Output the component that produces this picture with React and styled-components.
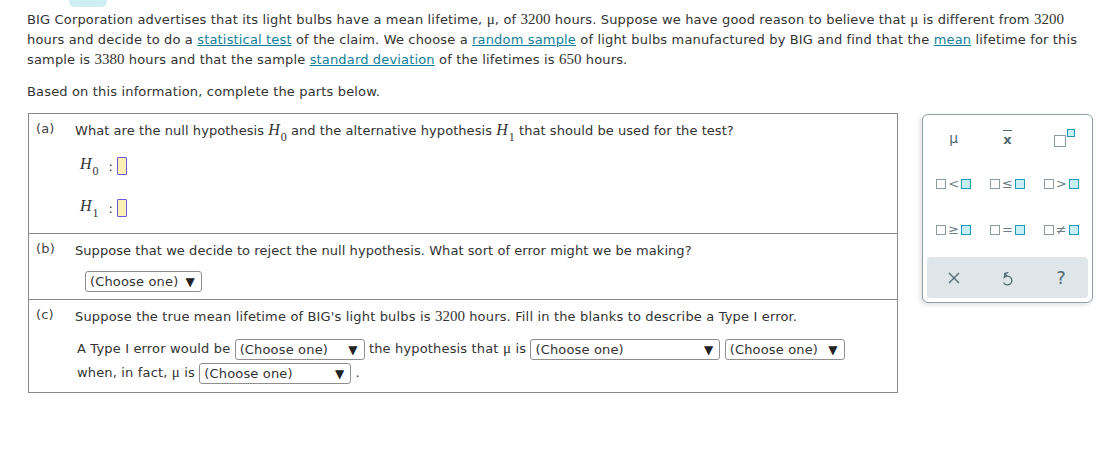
import React from 'react'
import styled, { createGlobalStyle } from 'styled-components'

const Global = createGlobalStyle`
  html, body { margin: 0; padding: 0; background: #fff; }
  body {
    font-family: "DejaVu Sans", Verdana, sans-serif;
    font-size: 13px;
    letter-spacing: 0.16px;
    color: #333;
  }
`

function Choose({ width }) {
    return (
        <Select $w={width}>
            <span>(Choose one)</span>
            <Arrow>▼</Arrow>
        </Select>
    )
}

function Hyp({ sub }) {
    return (
        <HVar>
            H<Sub>{sub}</Sub>
        </HVar>
    )
}

function Slot({ filled }) {
    return <Sq $filled={filled} />
}

function App() {
    return (
        <Page>
            <Global />
            <Badge />
            <Intro>
                <Row>
                    BIG Corporation advertises that its light bulbs have a mean lifetime, <Mu>μ</Mu>, of <Num>3200</Num> hours. Suppose we have good reason to believe that <Mu>μ</Mu> is different from <Num>3200</Num>
                </Row>
                <Row>
                    hours and decide to do a <Link>statistical test</Link> of the claim. We choose a <Link>random sample</Link> of light bulbs manufactured by BIG and find that the <Link>mean</Link> lifetime for this
                </Row>
                <Row>
                    sample is <Num>3380</Num> hours and that the sample <Link>standard deviation</Link> of the lifetimes is <Num>650</Num> hours.
                </Row>
            </Intro>
            <Lead>Based on this information, complete the parts below.</Lead>

            <Work>
                <Table>
                    <Part $h={120}>
                        <Label>(a)</Label>
                        <Body>
                            <Question $tight>
                                What are the null hypothesis <Hyp sub="0" /> and the alternative hypothesis <Hyp sub="1" /> that should be used for the test?
                            </Question>
                            <HypRow $top={12}>
                                <Hyp sub="0" /><Colon>:</Colon><Input />
                            </HypRow>
                            <HypRow $top={20}>
                                <Hyp sub="1" /><Colon>:</Colon><Input />
                            </HypRow>
                        </Body>
                    </Part>
                    <Part $h={66}>
                        <Label>(b)</Label>
                        <Body>
                            <Question $tight>Suppose that we decide to reject the null hypothesis. What sort of error might we be making?</Question>
                            <Indent $top={9}>
                                <Choose width={117} />
                            </Indent>
                        </Body>
                    </Part>
                    <Part $h={92} $last>
                        <Label>(c)</Label>
                        <Body>
                            <Question>Suppose the true mean lifetime of BIG's light bulbs is <Num>3200</Num> hours. Fill in the blanks to describe a Type I error.</Question>
                            <Sentence>
                                <Line>
                                    A Type I error would be <Choose width={130} /> the hypothesis that <Mu>μ</Mu> is <Choose width={190} /> <Choose width={120} />
                                </Line>
                                <Line>
                                    when, in fact, <Mu>μ</Mu> is <Choose width={152} /> .
                                </Line>
                            </Sentence>
                        </Body>
                    </Part>
                </Table>

                <Pad>
                    <Keys>
                        <Key><MuKey>μ</MuKey></Key>
                        <Key><XBar>x</XBar></Key>
                        <Key>
                            <Power>
                                <BigSq />
                                <SmallSq />
                            </Power>
                        </Key>
                        <Key><Rel><Slot /><Op>&lt;</Op><Slot filled /></Rel></Key>
                        <Key><Rel><Slot /><Op>≤</Op><Slot filled /></Rel></Key>
                        <Key><Rel><Slot /><Op>&gt;</Op><Slot filled /></Rel></Key>
                        <Key><Rel><Slot /><Op>≥</Op><Slot filled /></Rel></Key>
                        <Key><Rel><Slot /><Op>=</Op><Slot filled /></Rel></Key>
                        <Key><Rel><Slot /><Op>≠</Op><Slot filled /></Rel></Key>
                    </Keys>
                    <Tools>
                        <svg width="14" height="14" viewBox="0 0 14 14">
                            <path d="M2 2 L12 12 M12 2 L2 12" stroke="#4f6a73" strokeWidth="1.4" fill="none" />
                        </svg>
                        <svg width="14" height="16" viewBox="0 0 14 16">
                            <path d="M5 3.4 L4.4 7.4 A4.4 4.4 0 1 1 3.8 13" stroke="#4f6a73" strokeWidth="1.3" fill="none" strokeLinecap="round" />
                            <path d="M8 2.6 L5 3.4 L6.6 5.8" stroke="#4f6a73" strokeWidth="1.3" fill="none" strokeLinecap="round" strokeLinejoin="round" />
                        </svg>
                        <QMark>?</QMark>
                    </Tools>
                </Pad>
            </Work>
        </Page>
    )
}

export default App

const Page = styled.div`
position: relative;
padding: 10px 0 0 27px;
width: 1091px;
box-sizing: border-box;
`

const Badge = styled.div`
position: absolute;
left: 69px;
top: -10px;
width: 38px;
height: 17px;
border-radius: 6px;
background: #cdeef3;
`

const Intro = styled.div`
line-height: 20px;
`

const Row = styled.div`
white-space: nowrap;
height: 20px;
`

const Num = styled.span`
font-family: "Liberation Serif", "Times New Roman", serif;
font-size: 15px;
line-height: 1;
letter-spacing: 0;
`

const Mu = styled.span`
font-family: "Liberation Serif", "Times New Roman", serif;
font-size: 15px;
line-height: 1;
`

const Link = styled.a`
color: #117e99;
text-decoration: underline;
cursor: pointer;
`

const Lead = styled.p`
margin: 12px 0 0;
line-height: 20px;
`

const Work = styled.div`
display: flex;
align-items: flex-start;
gap: 24px;
margin-top: 11px;
`

const Table = styled.div`
flex: none;
width: 868px;
border: 1px solid #8a8a8a;
margin-left: 1px;
`

const Part = styled.div`
display: flex;
height: ${p => p.$h}px;
box-sizing: border-box;
border-bottom: ${p => (p.$last ? 'none' : '1px solid #8a8a8a')};
padding: 6px 0 0 7px;
`

const Label = styled.div`
width: 39px;
flex: none;
color: #444;
line-height: 18px;
`

const Body = styled.div`
flex: 1;
`

const Question = styled.div`
line-height: 22px;
white-space: nowrap;
letter-spacing: ${p => (p.$tight ? '0.06px' : '0.16px')};
`

const HVar = styled.span`
font-family: "Liberation Serif", "Times New Roman", serif;
font-style: italic;
font-size: 16px;
line-height: 1;
letter-spacing: 0;
`

const Sub = styled.sub`
font-style: normal;
font-size: 12px;
vertical-align: -6px;
margin-left: 1px;
line-height: 1;
`

const HypRow = styled.div`
display: flex;
align-items: center;
margin: ${p => p.$top}px 0 0 5px;
height: 22px;
`

const Colon = styled.span`
margin: 0 4px 0 10px;
`

const Input = styled.span`
display: inline-block;
width: 8px;
height: 16px;
background: #fcefb4;
border: 1.5px solid #6a58e0;
border-radius: 1px;
`

const Indent = styled.div`
margin: ${p => p.$top}px 0 0 10px;
`

const Select = styled.span`
display: inline-flex;
align-items: center;
justify-content: space-between;
box-sizing: border-box;
width: ${p => p.$w}px;
height: 21px;
padding: 0 6px 0 4px;
border: 1px solid #8e8e8e;
border-radius: 3px;
background: #fff;
vertical-align: middle;
color: #333;
`

const Arrow = styled.span`
font-size: 12px;
color: #222;
`

const Sentence = styled.div`
margin: 9px 0 0 2px;
`

const Line = styled.div`
line-height: 24px;
white-space: nowrap;
`

const Pad = styled.div`
flex: none;
width: 171px;
box-sizing: border-box;
border: 1px solid #8da1a9;
border-radius: 6px;
box-shadow: -2px 2px 5px rgba(0, 0, 0, 0.12);
margin-top: 1px;
padding: 0 4px 4px;
background: #fff;
`

const Keys = styled.div`
display: grid;
grid-template-columns: repeat(3, 1fr);
grid-template-rows: 46px 46px 46px;
`

const Key = styled.div`
display: flex;
align-items: center;
justify-content: center;
color: #4f6a73;
`

const MuKey = styled.span`
font-family: "DejaVu Sans", sans-serif;
font-size: 14px;
`

const XBar = styled.span`
font-family: "DejaVu Sans", sans-serif;
font-weight: bold;
font-size: 13px;
line-height: 13px;
padding-top: 2px;
border-top: 1.5px solid #4f6a73;
`

const Power = styled.span`
display: inline-flex;
align-items: flex-start;
gap: 1px;
margin-left: 6px;
`

const BigSq = styled.span`
width: 10px;
height: 10px;
margin-top: 6px;
border: 1.5px solid #8a9ca2;
`

const SmallSq = styled.span`
width: 6px;
height: 6px;
background: #c9eef5;
border: 1.5px solid #1a9cb6;
`

const Rel = styled.span`
display: inline-flex;
align-items: center;
gap: 2px;
`

const Sq = styled.span`
width: 8px;
height: 8px;
background: ${p => (p.$filled ? '#c9eef5' : '#fff')};
border: 1.5px solid ${p => (p.$filled ? '#1a9cb6' : '#8a9ca2')};
`

const Op = styled.span`
font-size: 13px;
line-height: 10px;
color: #6a7f86;
`

const Tools = styled.div`
display: grid;
grid-template-columns: repeat(3, 1fr);
justify-items: center;
align-items: center;
height: 41px;
margin-top: 4px;
background: #dfe6e9;
border-radius: 4px;
`

const QMark = styled.span`
font-size: 18px;
color: #4f6a73;
`
